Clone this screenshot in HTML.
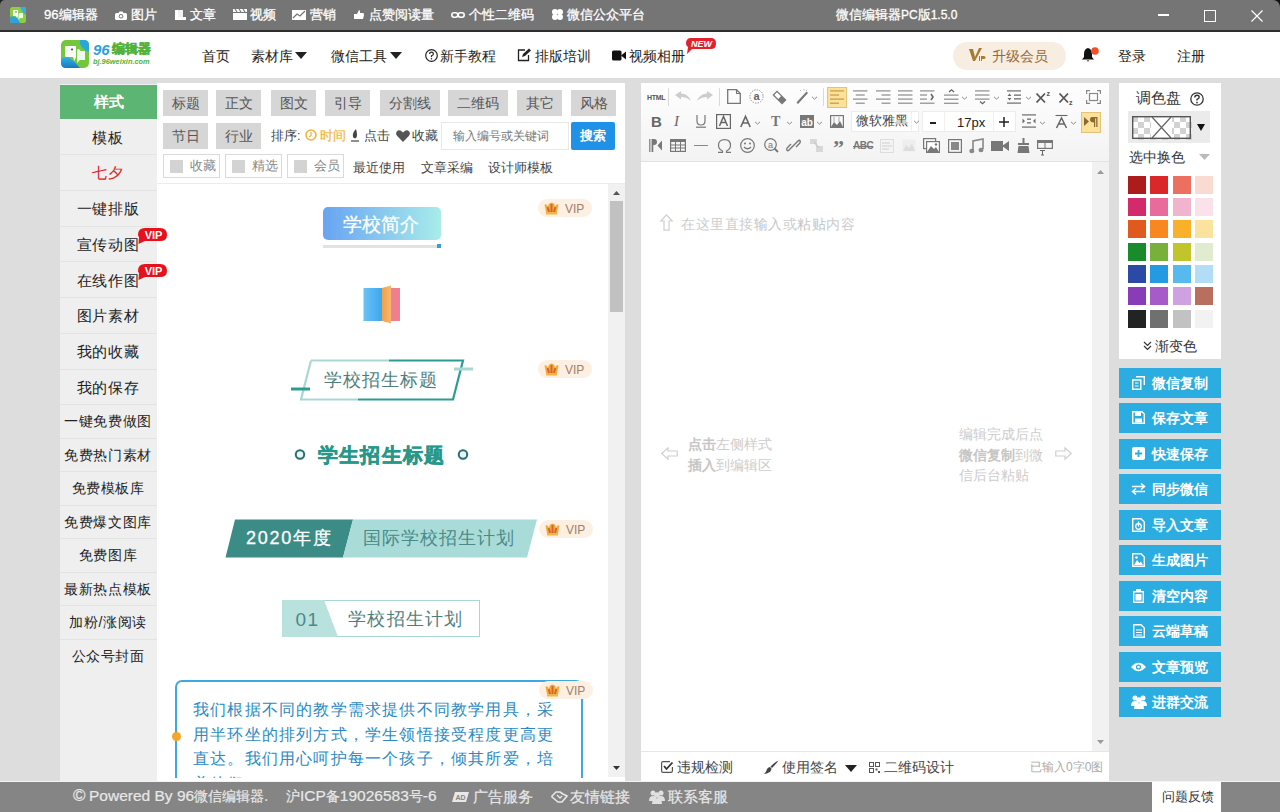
<!DOCTYPE html>
<html><head><meta charset="utf-8">
<style>
*{margin:0;padding:0;box-sizing:border-box}
html,body{width:1280px;height:812px;overflow:hidden}
body{position:relative;background:#dddddd;font-family:"Liberation Sans",sans-serif;font-size:14px;color:#333}
.a{position:absolute}
.t{position:absolute;white-space:nowrap;line-height:1}
svg{position:absolute;overflow:visible}
/* title bar */
#tb{left:0;top:0;width:1280px;height:32px;background:#757575;border-bottom:2px solid #2e2e2e}
#tb .t{color:#fff;font-size:14px;top:8px;-webkit-text-stroke:.3px #fff}
/* header */
#hd{left:0;top:32px;width:1280px;height:46px;background:#fff}
#hd .t{color:#222;font-size:14px;top:17px}
/* sidebar */
#sb{left:60px;top:84px;width:97px;height:698px;background:#efefef}
.si{position:absolute;left:0;width:97px;border-bottom:1px solid #e3e3e3;text-align:center;color:#222;font-size:15px;letter-spacing:.6px;text-indent:-1px}
/* panels */
#lp{left:157px;top:83px;width:468px;height:699px;background:#fff}
.tab{position:absolute;width:45px;height:26px;background:#d6d6d6;color:#555;font-size:14px;text-align:center;line-height:26px}
.ck{position:absolute;height:24px;border:1px solid #dadada;background:#fff;color:#888;font-size:12.5px;line-height:22px}
.ck i{position:absolute;left:6px;top:5px;width:13px;height:13px;background:#d3d3d3}
#ed{left:641px;top:83px;width:468px;height:699px;background:#fff}
#cp{left:1119px;top:83px;width:102px;height:276px;background:#fff}
.sw{position:absolute;width:18px;height:18px}
.btn{position:absolute;left:1119px;width:102px;height:30px;background:#2cade2;color:#fff;font-size:14px;font-weight:bold}
#ft{left:0;top:782px;width:1280px;height:30px;background:#858585}
#ft .t{color:#e8e8e8;font-size:14px;top:8px;-webkit-text-stroke:.2px #e8e8e8}
.vip{position:absolute;width:54px;height:18px;border-radius:9px;background:#fdf0e3}
.vip span{position:absolute;left:27px;top:4px;font-size:12px;color:#a08068;line-height:1}
</style></head><body>

<!-- TITLE BAR -->
<div class="a" style="left:1270px;top:0;width:10px;height:10px;background:#111"></div>
<div class="a" style="left:0;top:0;width:6px;height:6px;background:#222"></div>
<div id="tb" class="a" style="border-top-right-radius:7px;border-top-left-radius:5px">
  <svg style="left:10px;top:7px" width="16" height="16" viewBox="0 0 16 16">
    <rect x="0" y="0" width="16" height="16" rx="2.5" fill="#8ccf3e"/>
    <path d="M10 0 H13.5 Q16 0 16 2.5 V8 Q12 6 10 0Z" fill="#36aee0"/>
    <path d="M0 10 Q4 8 7 11 Q9 13 10 16 H2.5 Q0 16 0 13.5Z" fill="#2aa4dc"/>
    <path d="M3 3 H8 V9 L7 11 L6 9 H3Z" fill="#f6fff0"/>
    <path d="M9 6 H13 V11 H10 L8.5 13 V8Z" fill="#eef6f6"/>
    <circle cx="6" cy="5" r=".8" fill="#666"/>
  </svg>
  <div class="t" style="left:44px;font-size:13.2px">96编辑器</div>
  <svg style="left:115px;top:11px" width="12" height="9" viewBox="0 0 12 9"><path d="M1.5 2 H3.5 L4.5 .5 H7.5 L8.5 2 H10.5 Q12 2 12 3.5 V7.5 Q12 9 10.5 9 H1.5 Q0 9 0 7.5 V3.5 Q0 2 1.5 2Z" fill="#fff"/><circle cx="6" cy="5.3" r="2.2" fill="#757575"/><circle cx="6" cy="5.3" r="1.3" fill="#fff"/></svg>
  <div class="t" style="left:131px;font-size:13.2px">图片</div>
  <svg style="left:175px;top:10px" width="11" height="10" viewBox="0 0 11 10"><path d="M0 0 H3 V7 H11 V10 H0Z" fill="#fff"/><rect x="3" y="0" width="5" height="7" fill="#fff" opacity=".9"/></svg>
  <div class="t" style="left:190px;font-size:13.2px">文章</div>
  <svg style="left:233px;top:9px" width="14" height="11" viewBox="0 0 14 11"><rect x="0" y="0" width="14" height="3" fill="#fff"/><path d="M2 0 L4 3 M6 0 L8 3 M10 0 L12 3" stroke="#757575" stroke-width="1.2"/><rect x="0" y="4" width="14" height="7" fill="#fff"/></svg>
  <div class="t" style="left:250px;font-size:13.2px">视频</div>
  <svg style="left:292px;top:10px" width="14" height="10" viewBox="0 0 14 10"><rect width="14" height="10" fill="#fff"/><path d="M1 8 L5 4 L8 6 L13 1" stroke="#757575" stroke-width="1.3" fill="none"/></svg>
  <div class="t" style="left:310px;font-size:13.2px">营销</div>
  <svg style="left:354px;top:10px" width="10" height="9" viewBox="0 0 10 9"><path d="M0 4 H3 L5 0 Q6 0 6 2 V3 H9 Q10 3 10 5 L9 9 H0Z" fill="#fff"/></svg>
  <div class="t" style="left:369px;font-size:13.2px">点赞阅读量</div>
  <svg style="left:451px;top:12px" width="14" height="6" viewBox="0 0 14 6"><rect x=".8" y=".8" width="6" height="4.4" rx="2.2" stroke="#fff" stroke-width="1.6" fill="none"/><rect x="7.2" y=".8" width="6" height="4.4" rx="2.2" stroke="#fff" stroke-width="1.6" fill="none"/></svg>
  <div class="t" style="left:469px;font-size:13.2px">个性二维码</div>
  <svg style="left:551px;top:9px" width="13" height="11" viewBox="0 0 13 11"><circle cx="4" cy="3" r="3" fill="#fff"/><circle cx="9" cy="3" r="3" fill="#fff"/><circle cx="4" cy="8" r="3" fill="#fff"/><circle cx="9" cy="8" r="3" fill="#fff"/></svg>
  <div class="t" style="left:567px;font-size:13.2px">微信公众平台</div>
  <div class="t" style="left:836px;font-size:13.2px">微信编辑器<span style="font-size:12px">PC</span>版<span style="font-size:12px">1.5.0</span></div>
  <div class="a" style="left:1158px;top:14px;width:11px;height:1.5px;background:#fff"></div>
  <div class="a" style="left:1204px;top:10px;width:12px;height:12px;border:1.2px solid #fff"></div>
  <svg style="left:1251px;top:10px" width="12" height="12" viewBox="0 0 12 12"><path d="M0.5 0.5 L11.5 11.5 M11.5 0.5 L0.5 11.5" stroke="#fff" stroke-width="1.2"/></svg>
</div>

<!-- HEADER -->
<div id="hd" class="a">
  <svg style="left:61px;top:8px" width="28" height="28" viewBox="0 0 28 28">
    <defs><linearGradient id="lg2" x1="0" y1="0" x2="0" y2="1"><stop offset="0" stop-color="#2ab4e8"/><stop offset="1" stop-color="#1a78c0"/></linearGradient></defs>
    <rect x="0" y="0" width="28" height="28" rx="5" fill="#74c63a"/>
    <path d="M19 0 H23 Q28 0 28 5 V12 Q22 10 19 4Z" fill="#2aa6de"/>
    <path d="M0 19 Q5 15 10 19 Q15 23 19 28 H5 Q0 28 0 23Z" fill="url(#lg2)"/>
    <path d="M4 6 H14 Q15 6 15 7 V17 L13.5 21 L12 17 H5 Q4 17 4 16Z" fill="#fafafa"/>
    <path d="M16 10 Q17 8 19 10 L19.5 11 H24 V20 H19 L16 23Z" fill="#eef8ee"/>
    <circle cx="11" cy="9.5" r="1.1" fill="#555"/>
  </svg>
  <div class="t" style="left:93px;top:10px;font-size:15px;font-weight:bold;font-style:italic;color:#2b9fdc">96</div>
  <div class="t" style="left:112px;top:10px;font-size:13px;font-weight:bold;color:#52b23a;-webkit-text-stroke:.5px #52b23a">编辑器</div>
  <div class="t" style="left:93px;top:26px;font-size:7.4px;font-style:italic;font-weight:bold;color:#52b13c">bj.96weixin.com</div>
  <div class="t" style="left:202px">首页</div>
  <div class="t" style="left:251px">素材库</div>
  <svg style="left:295px;top:20px" width="12" height="8" viewBox="0 0 12 8"><path d="M0 0 H12 L6 7Z" fill="#222"/></svg>
  <div class="t" style="left:331px">微信工具</div>
  <svg style="left:390px;top:20px" width="12" height="8" viewBox="0 0 12 8"><path d="M0 0 H12 L6 7Z" fill="#222"/></svg>
  <svg style="left:425px;top:17px" width="13" height="13" viewBox="0 0 13 13"><circle cx="6.5" cy="6.5" r="5.8" stroke="#222" stroke-width="1.2" fill="none"/><path d="M4.6 5 Q4.6 3.2 6.5 3.2 Q8.4 3.2 8.4 4.9 Q8.4 6 6.5 6.8 V8" stroke="#222" stroke-width="1.2" fill="none"/><circle cx="6.5" cy="9.8" r=".8" fill="#222"/></svg>
  <div class="t" style="left:440px">新手教程</div>
  <svg style="left:517px;top:16px" width="15" height="14" viewBox="0 0 15 14"><path d="M8 2 H1.5 V12.5 H11.5 V7" stroke="#222" stroke-width="1.3" fill="none"/><path d="M5 9 L6 6 L12 0.5 L14 2.5 L8 8Z" fill="#222"/></svg>
  <div class="t" style="left:535px">排版培训</div>
  <svg style="left:612px;top:18px" width="14" height="11" viewBox="0 0 14 11"><rect x="0" y="0.5" width="9.5" height="10" rx="1.5" fill="#111"/><path d="M9 5.5 L14 1.5 V9.5Z" fill="#111"/></svg>
  <div class="t" style="left:629px">视频相册</div>
  <svg style="left:686px;top:6px" width="30" height="16" viewBox="0 0 30 16"><path d="M5 0 H25 Q30 0 30 5.5 Q30 11 25 11 H6 L1 16 L2 9 Q0 7.5 0 5.5 Q0 0 5 0Z" fill="#e4212a"/><text x="15.5" y="9" text-anchor="middle" font-family="Liberation Sans" font-size="9" font-weight="bold" font-style="italic" fill="#fff">NEW</text></svg>
  <div class="a" style="left:953px;top:10px;width:113px;height:28px;border-radius:14px;background:#f7eee1"></div>
  <svg style="left:969px;top:16px" width="17" height="14" viewBox="0 0 17 14"><path d="M0 1 H4 L6 9 L10 0 H13 L6 13 H4Z" fill="#a87a32"/><path d="M10 8 H11 V13 H10Z M12 8 H15 Q16.5 8 16.5 9.5 Q16.5 11 15 11 H13 V13 H12Z" fill="#a87a32"/></svg>
  <div class="t" style="left:992px;top:17px;font-size:14.4px;color:#9a6835">升级会员</div>
  <svg style="left:1081px;top:15px" width="18" height="16" viewBox="0 0 18 16"><path d="M7 1 Q3 2 3 7 V10 L1 12.5 H13 L11 10 V7 Q11 2 7 1Z" fill="#111"/><path d="M5.5 13.5 Q7 15.5 8.5 13.5Z" fill="#111"/><circle cx="14" cy="4" r="3.8" fill="#f04f2c"/></svg>
  <div class="t" style="left:1118px;top:17px;font-size:14.4px">登录</div>
  <div class="t" style="left:1177px;top:17px;font-size:14.4px">注册</div>
</div>

<!-- SIDEBAR -->
<div id="sb" class="a">
  <div class="si" style="top:1px;height:34.2px;line-height:34.2px;background:#5db574;color:#fff;font-weight:bold;border-bottom:none;letter-spacing:0;text-indent:0">样式</div>
  <div class="si" style="top:35.7px;height:35.7px;line-height:35.7px;">模板</div>
  <div class="si" style="top:71.4px;height:35.7px;line-height:35.7px;color:#d9221c">七夕</div>
  <div class="si" style="top:107.1px;height:35.7px;line-height:35.7px;">一键排版</div>
  <div class="si" style="top:142.8px;height:35.7px;line-height:35.7px;">宣传动图</div>
  <div class="si" style="top:178.5px;height:35.7px;line-height:35.7px;">在线作图</div>
  <div class="si" style="top:214.2px;height:35.7px;line-height:35.7px;">图片素材</div>
  <div class="si" style="top:249.9px;height:35.7px;line-height:35.7px;">我的收藏</div>
  <div class="si" style="top:285.6px;height:35.7px;line-height:35.7px;">我的保存</div>
  <div class="si" style="top:321.3px;height:33.5px;line-height:33.5px;font-size:14px">一键免费做图</div>
  <div class="si" style="top:354.8px;height:33.5px;line-height:33.5px;font-size:14px">免费热门素材</div>
  <div class="si" style="top:388.3px;height:33.5px;line-height:33.5px;font-size:14px">免费模板库</div>
  <div class="si" style="top:421.8px;height:33.5px;line-height:33.5px;font-size:14px">免费爆文图库</div>
  <div class="si" style="top:455.3px;height:33.5px;line-height:33.5px;font-size:14px">免费图库</div>
  <div class="si" style="top:488.8px;height:33.5px;line-height:33.5px;font-size:14px">最新热点模板</div>
  <div class="si" style="top:522.3px;height:33.5px;line-height:33.5px;font-size:14px">加粉/涨阅读</div>
  <div class="si" style="top:555.8px;height:33.5px;line-height:33.5px;font-size:14px;border-bottom:none">公众号封面</div>
</div>

<!-- LEFT PANEL -->
<div id="lp" class="a">
  <div class="tab" style="left:6px;top:7px;width:45px">标题</div>
  <div class="tab" style="left:59px;top:7px;width:45px">正文</div>
  <div class="tab" style="left:114px;top:7px;width:45px">图文</div>
  <div class="tab" style="left:168px;top:7px;width:45px">引导</div>
  <div class="tab" style="left:223px;top:7px;width:60px">分割线</div>
  <div class="tab" style="left:291px;top:7px;width:60px">二维码</div>
  <div class="tab" style="left:360px;top:7px;width:45px">其它</div>
  <div class="tab" style="left:414px;top:7px;width:45px">风格</div>
  <div class="tab" style="left:6px;top:40px">节日</div>
  <div class="tab" style="left:59px;top:40px">行业</div>
  <div class="t" style="left:114px;top:47px;font-size:12.5px;color:#444">排序:</div>
  <svg style="left:148px;top:46px" width="12" height="12" viewBox="0 0 12 12"><circle cx="6" cy="6" r="5" stroke="#f0b43c" stroke-width="1.6" fill="none"/><path d="M6 3 V6.5 L4 8" stroke="#f0b43c" stroke-width="1.3" fill="none"/></svg>
  <div class="t" style="left:163px;top:47px;font-size:12.5px;color:#f2b530;-webkit-text-stroke:.2px #f2b530">时间</div>
  <svg style="left:194px;top:46px" width="9" height="13" viewBox="0 0 9 13"><path d="M5 0 Q1 4 2 8 Q3 10 5 9 Q7 7 5 0Z" fill="#444"/><path d="M0 12 H8" stroke="#444" stroke-width="1.2"/></svg>
  <div class="t" style="left:207px;top:47px;font-size:12.5px;color:#444">点击</div>
  <svg style="left:239px;top:47px" width="14" height="12" viewBox="0 0 14 12"><path d="M7 12 L1.2 6 Q-1 3.5 1 1.2 Q3.5 -1 7 2.5 Q10.5 -1 13 1.2 Q15 3.5 12.8 6Z" fill="#555"/></svg>
  <div class="t" style="left:255px;top:47px;font-size:12.5px;color:#444">收藏</div>
  <div class="a" style="left:284px;top:39px;width:128px;height:28px;border:1px solid #e8e8e8;background:#fff"></div>
  <div class="t" style="left:296px;top:47px;font-size:12px;color:#777">输入编号或关键词</div>
  <div class="a" style="left:414px;top:39px;width:44px;height:28px;background:#1f92e8;border-radius:2px"></div>
  <div class="t" style="left:423px;top:46px;font-size:13px;color:#fff;font-weight:bold">搜索</div>
  <div class="ck" style="left:6px;top:71px;width:57px"><i></i><span style="position:absolute;left:26px">收藏</span></div>
  <div class="ck" style="left:68px;top:71px;width:57px"><i></i><span style="position:absolute;left:26px">精选</span></div>
  <div class="ck" style="left:130px;top:71px;width:57px"><i></i><span style="position:absolute;left:26px">会员</span></div>
  <div class="t" style="left:196px;top:78px;font-size:13px;color:#444">最近使用</div>
  <div class="t" style="left:264px;top:78px;font-size:13px;color:#444">文章采编</div>
  <div class="t" style="left:331px;top:78px;font-size:13px;color:#444">设计师模板</div>
  <div class="a" style="left:0;top:100px;width:468px;height:1px;background:#ececec"></div>
  <!-- scrollbar -->
  <div class="a" style="left:451px;top:101px;width:17px;height:593px;background:#f1f1f1"></div>
  <svg style="left:456px;top:108px" width="7" height="4" viewBox="0 0 7 4"><path d="M0 4 L3.5 0 L7 4Z" fill="#555"/></svg>
  <div class="a" style="left:453px;top:118px;width:13px;height:111px;background:#c1c1c1"></div>
  <svg style="left:456px;top:683px" width="7" height="4" viewBox="0 0 7 4"><path d="M0 0 L3.5 4 L7 0Z" fill="#333"/></svg>
</div>

<!-- PREVIEW (body coords) -->
<div class="a" style="left:157px;top:184px;width:451px;height:594px;overflow:hidden">
 <div class="a" style="left:-157px;top:-184px;width:1280px;height:1000px">
  <!-- 学校简介 -->
  <div class="a" style="left:323px;top:207px;width:118px;height:33px;border-radius:5px;background:linear-gradient(90deg,#68a4f2,#a8ecea)"></div>
  <div class="t" style="left:343px;top:215px;font-size:19px;color:#fff;-webkit-text-stroke:.25px #fff">学校简介</div>
  <div class="a" style="left:323px;top:245px;width:118px;height:3px;background:#e2e2e2"></div>
  <div class="a" style="left:437px;top:244px;width:4px;height:4px;background:#3e9ccc"></div>
  <div class="vip" style="left:538px;top:199px"><svg style="left:6px;top:2px" width="15" height="14" viewBox="0 0 15 14"><path d="M0.5 3.5 Q3 2.5 4 6 L4.5 3.5 Q7.5 -0.5 10.5 3.5 L11 6 Q12 2.5 14.5 3.5 L13 11 H2Z" fill="#f3aa3c"/><path d="M3.6 6 Q4.6 9 5 11 M7.5 3 V11 M11.4 6 Q10.4 9 10 11" stroke="#d6642c" stroke-width="1.9" fill="none"/><rect x="2" y="11" width="11" height="2.5" fill="#f2b444"/></svg><span>VIP</span></div>
  <!-- book -->
  <svg style="left:363px;top:285px" width="38" height="39" viewBox="0 0 38 39">
   <defs><linearGradient id="bk1" x1="0" x2="1"><stop offset="0" stop-color="#6cc2f4"/><stop offset="1" stop-color="#3aa6ee"/></linearGradient>
   <linearGradient id="bk2" x1="0" x2="1"><stop offset="0" stop-color="#f0a048"/><stop offset="1" stop-color="#f6b870"/></linearGradient></defs>
   <rect x="0.5" y="3" width="19" height="33" fill="url(#bk1)"/>
   <path d="M19 3 L28 0.5 V38.5 L19 36Z" fill="url(#bk2)"/>
   <rect x="28" y="3" width="9" height="33" fill="#f07e8e"/>
  </svg>
  <!-- 学校招生标题 frame -->
  <svg style="left:288px;top:358px" width="190" height="44" viewBox="0 0 190 44">
   <path d="M23 2.5 H101" stroke="#a9d7d3" stroke-width="2.2" fill="none"/>
   <path d="M101 2.5 H175 L165 41.5 H70" stroke="#2c9c92" stroke-width="2.2" fill="none"/>
   <path d="M70 41.5 H13 L23 2.5" stroke="#a9d7d3" stroke-width="2.2" fill="none"/>
   <path d="M3 31 H22" stroke="#2c9c92" stroke-width="3" fill="none"/>
   <path d="M166 11 H185" stroke="#a9d7d3" stroke-width="3" fill="none"/>
  </svg>
  <div class="t" style="left:324px;top:371px;font-size:18px;color:#4e7e7c;letter-spacing:1px">学校招生标题</div>
  <div class="vip" style="left:538px;top:360px"><svg style="left:6px;top:2px" width="15" height="14" viewBox="0 0 15 14"><path d="M0.5 3.5 Q3 2.5 4 6 L4.5 3.5 Q7.5 -0.5 10.5 3.5 L11 6 Q12 2.5 14.5 3.5 L13 11 H2Z" fill="#f3aa3c"/><path d="M3.6 6 Q4.6 9 5 11 M7.5 3 V11 M11.4 6 Q10.4 9 10 11" stroke="#d6642c" stroke-width="1.9" fill="none"/><rect x="2" y="11" width="11" height="2.5" fill="#f2b444"/></svg><span>VIP</span></div>
  <!-- 学生招生标题 -->
  <svg style="left:291px;top:446px" width="180" height="17" viewBox="0 0 180 17">
   <circle cx="9" cy="8.5" r="6" fill="#e0f6f6" opacity=".8"/><circle cx="9" cy="8.5" r="4.2" stroke="#2f6e6a" stroke-width="2" fill="#e4f7f7"/>
   <circle cx="172" cy="8.5" r="6" fill="#e0f6f6" opacity=".8"/><circle cx="172" cy="8.5" r="4.2" stroke="#2f6e6a" stroke-width="2" fill="#e4f7f7"/>
  </svg>
  <div class="t" style="left:318px;top:445px;font-size:20px;font-weight:bold;color:#26988a;letter-spacing:1.2px;-webkit-text-stroke:.5px #26988a">学生招生标题</div>
  <!-- 2020年度 -->
  <svg style="left:225px;top:519px" width="315" height="39" viewBox="0 0 315 39">
   <path d="M10 0.5 H128 L118 38.5 H0.5Z" fill="#3b8b87"/>
   <path d="M128 0.5 H312 L302 38.5 H118Z" fill="#a9dcd8"/>
  </svg>
  <div class="t" style="left:246px;top:529px;font-size:18px;color:#fff;letter-spacing:1.7px;-webkit-text-stroke:.3px #fff">2020年度</div>
  <div class="t" style="left:363px;top:529px;font-size:18px;color:#4a8a88;letter-spacing:1px">国际学校招生计划</div>
  <div class="vip" style="left:539px;top:520px"><svg style="left:6px;top:2px" width="15" height="14" viewBox="0 0 15 14"><path d="M0.5 3.5 Q3 2.5 4 6 L4.5 3.5 Q7.5 -0.5 10.5 3.5 L11 6 Q12 2.5 14.5 3.5 L13 11 H2Z" fill="#f3aa3c"/><path d="M3.6 6 Q4.6 9 5 11 M7.5 3 V11 M11.4 6 Q10.4 9 10 11" stroke="#d6642c" stroke-width="1.9" fill="none"/><rect x="2" y="11" width="11" height="2.5" fill="#f2b444"/></svg><span>VIP</span></div>
  <!-- 01 -->
  <div class="a" style="left:282px;top:600px;width:198px;height:37px;border:1.5px solid #a9d8d4"></div>
  <svg style="left:282px;top:600px" width="58" height="37" viewBox="0 0 58 37"><path d="M0 0 H42 L56 37 H0Z" fill="#b9e1dd"/></svg>
  <div class="t" style="left:295.5px;top:610px;font-size:19px;color:#4a8a88;letter-spacing:1.5px">01</div>
  <div class="t" style="left:348px;top:610px;font-size:18px;color:#4e7e7c;letter-spacing:1.3px">学校招生计划</div>
  <!-- text box -->
  <div class="a" style="left:175px;top:680px;width:408px;height:200px;border:2px solid #3ea9e0;border-radius:7px"></div>
  <div class="a" style="left:172px;top:732px;width:9px;height:9px;border-radius:50%;background:#f4a62a"></div>
  <div class="a" style="left:193px;top:698px;width:370px;font-size:16px;line-height:24.5px;color:#2b8ac2;letter-spacing:1.2px">我们根据不同的教学需求提供不同教学用具，采用半环坐的排列方式，学生领悟接受程度更高更直达。我们用心呵护每一个孩子，倾其所爱，培养他们</div>
  <div class="vip" style="left:539px;top:681px"><svg style="left:6px;top:2px" width="15" height="14" viewBox="0 0 15 14"><path d="M0.5 3.5 Q3 2.5 4 6 L4.5 3.5 Q7.5 -0.5 10.5 3.5 L11 6 Q12 2.5 14.5 3.5 L13 11 H2Z" fill="#f3aa3c"/><path d="M3.6 6 Q4.6 9 5 11 M7.5 3 V11 M11.4 6 Q10.4 9 10 11" stroke="#d6642c" stroke-width="1.9" fill="none"/><rect x="2" y="11" width="11" height="2.5" fill="#f2b444"/></svg><span>VIP</span></div>
 </div>
</div>
<svg style="left:138px;top:228px" width="29" height="16" viewBox="0 0 29 16"><path d="M7 0 H22 Q29 0 29 7 Q29 13 22 13 H7 L0.5 16 L1 9 Q0 8 0 7 Q0 0 7 0Z" fill="#e8111b"/><text x="15.5" y="10.5" text-anchor="middle" font-family="Liberation Sans" font-size="11" font-weight="bold" fill="#fff">VIP</text></svg>
<svg style="left:138px;top:264px" width="29" height="16" viewBox="0 0 29 16"><path d="M7 0 H22 Q29 0 29 7 Q29 13 22 13 H7 L0.5 16 L1 9 Q0 8 0 7 Q0 0 7 0Z" fill="#e8111b"/><text x="15.5" y="10.5" text-anchor="middle" font-family="Liberation Sans" font-size="11" font-weight="bold" fill="#fff">VIP</text></svg>

<!-- EDITOR -->
<div id="ed" class="a"></div>
<div class="a" style="left:641px;top:83px;width:468px;height:79px;background:linear-gradient(#fefefe,#f3f3f3);border-bottom:1px solid #e3e3e3"></div>
<div class="t" style="left:647px;top:94px;font-size:7px;font-weight:bold;color:#555;letter-spacing:-.3px">HTML</div>
<div class="a" style="left:668px;top:88px;width:1px;height:18px;background:#dadada"></div>
<svg style="left:675px;top:91px" width="16" height="10" viewBox="0 0 16 10"><path d="M0 4 L6 0 V2.5 Q13 2.5 16 10 Q12 6 6 6 V8.5Z" fill="#cdcdcd"/></svg>
<svg style="left:697px;top:91px" width="16" height="10" viewBox="0 0 16 10"><path d="M16 4 L10 0 V2.5 Q3 2.5 0 10 Q4 6 10 6 V8.5Z" fill="#cdcdcd"/></svg>
<div class="a" style="left:719px;top:88px;width:1px;height:18px;background:#dadada"></div>
<svg style="left:727px;top:89px" width="14" height="15" viewBox="0 0 14 15"><path d="M.7 .7 H9.5 L13.3 4.5 V14.3 H.7Z" stroke="#777" stroke-width="1.3" fill="none"/><path d="M9.5 .7 V4.5 H13.3" stroke="#777" stroke-width="1.1" fill="none"/></svg>
<svg style="left:749px;top:89px" width="15" height="15" viewBox="0 0 15 15"><text x="7.5" y="11" text-anchor="middle" font-family="Liberation Sans" font-size="11" font-weight="bold" fill="#666">a</text><circle cx="7.5" cy="7.5" r="6.6" stroke="#888" stroke-width="1" stroke-dasharray="1.3 1.3" fill="none"/></svg>
<svg style="left:772px;top:90px" width="15" height="15" viewBox="0 0 15 15"><path d="M5 0.5 L14.5 10 L10 14.5 L0.5 5Z" fill="#777"/><path d="M5 2.3 L9 6.3 L6.3 9 L2.3 5Z" fill="#fff"/></svg>
<svg style="left:796px;top:89px" width="13" height="16" viewBox="0 0 13 16"><path d="M12 4 L2 15 L0.5 13.5 L10.5 2.5Z" fill="#777"/><path d="M4 1 L5 2 M8 0 V1.5 M11 1 L10 2" stroke="#aaa" stroke-width=".8"/></svg>
<svg style="left:811px;top:96px" width="7" height="4" viewBox="0 0 7 4"><path d="M1 .8 L3.5 3.2 L6 .8" stroke="#8a8a8a" stroke-width="1" fill="none"/></svg>
<div class="a" style="left:823px;top:88px;width:1px;height:18px;background:#dadada"></div>
<div class="a" style="left:827px;top:87px;width:20px;height:21px;background:#fce19a;border:1px solid #e3c37a"></div>
<svg style="left:830px;top:90px" width="15" height="14" viewBox="0 0 15 14"><rect x="0" y="0.3" width="14" height="1.2" fill="#c39a45"/><rect x="0" y="4.3999999999999995" width="9" height="1.2" fill="#c39a45"/><rect x="0" y="8.5" width="14" height="1.2" fill="#c39a45"/><rect x="0" y="12.6" width="9" height="1.2" fill="#c39a45"/></svg><svg style="left:853px;top:90px" width="15" height="14" viewBox="0 0 15 14"><rect x="0" y="0.3" width="14.5" height="1.2" fill="#8c8c8c"/><rect x="2.75" y="4.3999999999999995" width="9" height="1.2" fill="#8c8c8c"/><rect x="0" y="8.5" width="14.5" height="1.2" fill="#8c8c8c"/><rect x="2.75" y="12.6" width="9" height="1.2" fill="#8c8c8c"/></svg><svg style="left:876px;top:90px" width="15" height="14" viewBox="0 0 15 14"><rect x="0" y="0.3" width="14.5" height="1.2" fill="#8c8c8c"/><rect x="5.5" y="4.3999999999999995" width="9" height="1.2" fill="#8c8c8c"/><rect x="0" y="8.5" width="14.5" height="1.2" fill="#8c8c8c"/><rect x="5.5" y="12.6" width="9" height="1.2" fill="#8c8c8c"/></svg><svg style="left:898px;top:90px" width="15" height="14" viewBox="0 0 15 14"><rect x="0" y="0.3" width="14.5" height="1.2" fill="#8c8c8c"/><rect x="0" y="4.3999999999999995" width="14.5" height="1.2" fill="#8c8c8c"/><rect x="0" y="8.5" width="14.5" height="1.2" fill="#8c8c8c"/><rect x="0" y="12.6" width="14.5" height="1.2" fill="#8c8c8c"/></svg><svg style="left:920px;top:90px" width="15" height="14" viewBox="0 0 15 14"><rect x="0" y=".3" width="14.5" height="1.2" fill="#8c8c8c"/><rect x="0" y="4.4" width="7" height="1.2" fill="#8c8c8c"/><rect x="0" y="8.5" width="7" height="1.2" fill="#8c8c8c"/><rect x="0" y="12.6" width="14.5" height="1.2" fill="#8c8c8c"/><path d="M11 4 L13 7 L11 10" stroke="#666" stroke-width="1.6" fill="none"/></svg>
<svg style="left:944px;top:89px" width="15" height="15" viewBox="0 0 15 15"><path d="M5 3 L7.5 .8 L10 3" stroke="#666" stroke-width="1.3" fill="none"/><rect x="0" y="5.5" width="14.5" height="1.2" fill="#8c8c8c"/><rect x="0" y="9.6" width="14.5" height="1.2" fill="#8c8c8c"/><rect x="0" y="13.7" width="14.5" height="1.2" fill="#8c8c8c"/></svg>
<svg style="left:961px;top:96px" width="7" height="4" viewBox="0 0 7 4"><path d="M1 .8 L3.5 3.2 L6 .8" stroke="#8a8a8a" stroke-width="1" fill="none"/></svg>
<svg style="left:975px;top:90px" width="15" height="15" viewBox="0 0 15 15"><rect x="0" y=".3" width="14.5" height="1.2" fill="#8c8c8c"/><rect x="0" y="4.4" width="14.5" height="1.2" fill="#8c8c8c"/><rect x="0" y="8.5" width="14.5" height="1.2" fill="#8c8c8c"/><path d="M5 11.5 L7.5 13.7 L10 11.5" stroke="#666" stroke-width="1.3" fill="none"/></svg>
<svg style="left:993px;top:96px" width="7" height="4" viewBox="0 0 7 4"><path d="M1 .8 L3.5 3.2 L6 .8" stroke="#8a8a8a" stroke-width="1" fill="none"/></svg>
<svg style="left:1007px;top:90px" width="14" height="14" viewBox="0 0 14 14"><rect x="0" y=".3" width="14" height="1.2" fill="#6b6b6b"/><rect x="0" y="12.5" width="14" height="1.2" fill="#6b6b6b"/><path d="M2.5 3.5 L4.5 6 H.5Z M2.5 10.5 L4.5 8 H.5Z" fill="#6b6b6b"/><rect x="7" y="4.5" width="7" height="1.3" fill="#6b6b6b"/><rect x="7" y="8.2" width="7" height="1.3" fill="#6b6b6b"/></svg>
<svg style="left:1025px;top:96px" width="7" height="4" viewBox="0 0 7 4"><path d="M1 .8 L3.5 3.2 L6 .8" stroke="#8a8a8a" stroke-width="1" fill="none"/></svg>
<svg style="left:1036px;top:90px" width="15" height="13" viewBox="0 0 15 13"><path d="M0.5 3.5 L9 12.5 M9 3.5 L0.5 12.5" stroke="#555" stroke-width="1.8"/><text x="10.5" y="6" font-family="Liberation Sans" font-size="7" font-weight="bold" fill="#555">z</text></svg>
<svg style="left:1059px;top:93px" width="15" height="13" viewBox="0 0 15 13"><path d="M0.5 0.5 L9 9.5 M9 0.5 L0.5 9.5" stroke="#555" stroke-width="1.8"/><text x="10" y="11.5" font-family="Liberation Sans" font-size="7" font-weight="bold" fill="#555">z</text></svg>
<svg style="left:1086px;top:90px" width="15" height="14" viewBox="0 0 15 14"><path d="M.6 4 V.6 H4 M11 .6 H14.4 V4 M14.4 10 V13.4 H11 M4 13.4 H.6 V10" stroke="#888" stroke-width="1.2" fill="none"/><rect x="3.5" y="3.5" width="8" height="7" stroke="#888" stroke-width="1.2" fill="none"/></svg>
<!-- row 2 -->
<div class="t" style="left:651px;top:114px;font-size:15px;font-weight:bold;color:#666">B</div>
<div class="t" style="left:674px;top:114px;font-size:15px;font-style:italic;font-family:'Liberation Serif';color:#666">I</div>
<svg style="left:696px;top:115px" width="10" height="13" viewBox="0 0 10 13"><path d="M1 0 V6 Q1 10 5 10 Q9 10 9 6 V0" stroke="#777" stroke-width="1.2" fill="none"/><rect x="0" y="11.6" width="10" height="1.2" fill="#777"/></svg>
<svg style="left:716px;top:114px" width="15" height="15" viewBox="0 0 15 15"><rect x=".6" y=".6" width="13.8" height="13.8" stroke="#666" stroke-width="1.2" fill="none"/><path d="M3.5 12 L7.5 2.5 L11.5 12 M5 8.5 H10" stroke="#666" stroke-width="1.5" fill="none"/></svg>
<svg style="left:740px;top:116px" width="11" height="11" viewBox="0 0 11 11"><path d="M.8 11 L5.5 .5 L10.2 11 M2.6 7 H8.4" stroke="#666" stroke-width="1.6" fill="none"/></svg>
<svg style="left:754px;top:121px" width="7" height="4" viewBox="0 0 7 4"><path d="M1 .8 L3.5 3.2 L6 .8" stroke="#8a8a8a" stroke-width="1" fill="none"/></svg>
<div class="t" style="left:771px;top:115px;font-size:14px;font-family:'Liberation Serif';font-weight:bold;color:#777">T</div>
<svg style="left:786px;top:121px" width="7" height="4" viewBox="0 0 7 4"><path d="M1 .8 L3.5 3.2 L6 .8" stroke="#8a8a8a" stroke-width="1" fill="none"/></svg>
<svg style="left:800px;top:115px" width="14" height="13" viewBox="0 0 14 13"><rect width="14" height="13" fill="#777"/><text x="7" y="11" text-anchor="middle" font-family="Liberation Sans" font-size="10" font-weight="bold" fill="#fff">ab</text></svg>
<svg style="left:816px;top:121px" width="7" height="4" viewBox="0 0 7 4"><path d="M1 .8 L3.5 3.2 L6 .8" stroke="#8a8a8a" stroke-width="1" fill="none"/></svg>
<svg style="left:830px;top:115px" width="14" height="13" viewBox="0 0 14 13"><rect x=".6" y=".6" width="12.8" height="11.8" stroke="#777" stroke-width="1.2" fill="none"/><path d="M1 12 L4 7 L7 10 L10 6 L13 12Z" fill="#777"/><path d="M4 2 V7 M9 2 V7" stroke="#999" stroke-width=".8"/></svg>
<div class="a" style="left:851px;top:111px;width:68px;height:21px;background:#fff;border:1px solid #ececec"></div>
<div class="a" style="left:911px;top:112px;width:1px;height:19px;background:#f0f0f0"></div>
<div class="t" style="left:856px;top:115px;font-size:12.5px;color:#444">微软雅黑</div>
<svg style="left:913px;top:120px" width="7" height="4" viewBox="0 0 7 4"><path d="M1 .8 L3.5 3.2 L6 .8" stroke="#8a8a8a" stroke-width="1" fill="none"/></svg>
<div class="a" style="left:922px;top:111px;width:94px;height:21px;background:#fff;border:1px solid #ececec"></div>
<div class="a" style="left:944px;top:112px;width:1px;height:19px;background:#f0f0f0"></div>
<div class="a" style="left:993px;top:112px;width:1px;height:19px;background:#f0f0f0"></div>
<div class="a" style="left:930px;top:122px;width:6px;height:2px;background:#222"></div>
<div class="t" style="left:957px;top:116px;font-size:13px;color:#222">17px</div>
<svg style="left:999px;top:117px" width="10" height="10" viewBox="0 0 10 10"><path d="M5 0 V10 M0 5 H10" stroke="#222" stroke-width="1.5"/></svg>
<svg style="left:1022px;top:114px" width="14" height="14" viewBox="0 0 14 14"><rect x="0" y=".3" width="14" height="1.2" fill="#6b6b6b"/><rect x="0" y="12.5" width="14" height="1.2" fill="#6b6b6b"/><path d="M0.5 4.5 L3 7 L.5 9.5Z M13.5 4.5 L11 7 L13.5 9.5Z" fill="#6b6b6b"/><rect x="5" y="4.5" width="4" height="1.3" fill="#6b6b6b"/><rect x="5" y="8.2" width="4" height="1.3" fill="#6b6b6b"/></svg>
<svg style="left:1039px;top:121px" width="7" height="4" viewBox="0 0 7 4"><path d="M1 .8 L3.5 3.2 L6 .8" stroke="#8a8a8a" stroke-width="1" fill="none"/></svg>
<svg style="left:1055px;top:114px" width="13" height="14" viewBox="0 0 13 14"><path d="M.5 1.5 H12.5" stroke="#666" stroke-width="1.1"/><path d="M1.5 14 L6.5 4 L11.5 14 M3.5 10 H9.5" stroke="#666" stroke-width="1.5" fill="none"/></svg>
<svg style="left:1070px;top:121px" width="7" height="4" viewBox="0 0 7 4"><path d="M1 .8 L3.5 3.2 L6 .8" stroke="#8a8a8a" stroke-width="1" fill="none"/></svg>
<div class="a" style="left:1081px;top:112px;width:20px;height:21px;background:#fce19a;border:1px solid #e3c37a"></div>
<svg style="left:1084px;top:116px" width="14" height="12" viewBox="0 0 14 12"><path d="M0 1 L5 5.5 L0 10Z" fill="#8a6a30"/><path d="M8 1 H13.5 V11 H12.2 V2.2 H11.2 V11 H10 V6.5 Q6 6.5 6 3.8 Q6 1 8 1Z" fill="#8a6a30"/></svg>
<!-- row 3 -->
<svg style="left:649px;top:139px" width="13" height="13" viewBox="0 0 13 13"><path d="M0.5 0 V13 M2 0 V13" stroke="#777" stroke-width=".8"/><path d="M3 0 H5 Q8 0 8 3 Q8 6 5 6 H4.3 V13 H3Z" fill="#777"/><path d="M13 1.5 L8.5 6.5 L13 11.5Z" fill="#777"/></svg>
<svg style="left:670px;top:139px" width="16" height="13" viewBox="0 0 16 13"><rect x=".6" y=".6" width="14.8" height="11.8" stroke="#777" stroke-width="1.2" fill="none"/><rect x="0" y="0" width="16" height="3" fill="#777"/><path d="M0 6 H16 M0 9 H16 M5.5 0 V13 M10.5 0 V13" stroke="#777" stroke-width="1"/></svg>
<div class="a" style="left:694px;top:145px;width:14px;height:1.2px;background:#888"></div>
<svg style="left:717px;top:139px" width="15" height="14" viewBox="0 0 15 14"><path d="M1 13.4 H5.5 V12 Q1.5 10 1.5 6.5 Q1.5 .7 7.5 .7 Q13.5 .7 13.5 6.5 Q13.5 10 9.5 12 V13.4 H14" stroke="#777" stroke-width="1.2" fill="none"/></svg>
<svg style="left:740px;top:138px" width="15" height="15" viewBox="0 0 15 15"><circle cx="7.5" cy="7.5" r="6.8" stroke="#777" stroke-width="1.2" fill="none"/><circle cx="5" cy="5.5" r="1" fill="#777"/><circle cx="10" cy="5.5" r="1" fill="#777"/><path d="M4 9 Q7.5 12.5 11 9" stroke="#777" stroke-width="1.2" fill="none"/></svg>
<svg style="left:764px;top:138px" width="15" height="15" viewBox="0 0 15 15"><circle cx="6.5" cy="6.5" r="5.8" stroke="#777" stroke-width="1.2" fill="none"/><text x="6.5" y="9.5" text-anchor="middle" font-family="Liberation Sans" font-size="9" fill="#777">a</text><path d="M10.5 10.5 L14 14" stroke="#777" stroke-width="1.8"/></svg>
<svg style="left:786px;top:138px" width="15" height="15" viewBox="0 0 15 15"><path d="M6 9 L3 12 Q1.5 13.5 0.8 12 Q0.3 10.5 2 9 L5 6 M9 6 L12 3 Q13.5 1.5 14.2 3 Q14.7 4.5 13 6 L10 9 M5 10 L10 5" stroke="#777" stroke-width="1.4" fill="none"/></svg>
<svg style="left:809px;top:138px" width="15" height="15" viewBox="0 0 15 15"><rect x="1" y="1" width="7" height="5" fill="#d8d8d8"/><rect x="7" y="8" width="7" height="6" fill="#d8d8d8"/><path d="M5 4 L10 10" stroke="#ccc" stroke-width="1.5"/></svg>
<div class="t" style="left:833px;top:137px;font-size:22px;font-weight:bold;font-family:'Liberation Serif';color:#777">”</div>
<div class="t" style="left:853px;top:141px;font-size:10px;font-weight:bold;color:#777;letter-spacing:-.5px;text-decoration:line-through">ABC</div>
<svg style="left:880px;top:139px" width="14" height="14" viewBox="0 0 14 14"><rect x=".5" y=".5" width="13" height="13" stroke="#ddd" fill="#f4f4f4"/><path d="M2 4 H10 M2 7 H12 M2 10 H9" stroke="#d0d0d0" stroke-width="1.2"/></svg>
<svg style="left:902px;top:139px" width="14" height="13" viewBox="0 0 14 13"><rect x=".5" y=".5" width="13" height="12" fill="#eee"/><path d="M1 12 L4 6 L7 9 L10 5 L13 12Z" fill="#ddd"/></svg>
<svg style="left:923px;top:138px" width="17" height="15" viewBox="0 0 17 15"><rect x=".6" y=".6" width="12" height="10" stroke="#777" stroke-width="1.2" fill="#f6f6f6"/><rect x="3.6" y="3.6" width="12.8" height="10.8" stroke="#777" stroke-width="1.2" fill="#fff"/><path d="M4 14 L8 8 L11 11 L13 9 L16 14Z" fill="#777"/><circle cx="13" cy="6.5" r="1.2" fill="#777"/></svg>
<svg style="left:948px;top:139px" width="14" height="14" viewBox="0 0 14 14"><rect x=".6" y=".6" width="12.8" height="12.8" stroke="#777" stroke-width="1.2" fill="none"/><rect x="3" y="3" width="8" height="8" fill="#888"/></svg>
<svg style="left:969px;top:139px" width="15" height="15" viewBox="0 0 15 15"><path d="M4 11 V2 L14 0 V10" stroke="#888" stroke-width="1.6" fill="none"/><ellipse cx="2.8" cy="12" rx="2.5" ry="2.2" fill="#888"/><ellipse cx="12" cy="11" rx="2.5" ry="2.2" fill="#888"/></svg>
<svg style="left:991px;top:141px" width="18" height="10" viewBox="0 0 18 10"><rect width="12" height="10" fill="#777"/><path d="M11 5 L18 0 V10Z" fill="#777"/></svg>
<svg style="left:1017px;top:138px" width="13" height="15" viewBox="0 0 13 15"><rect x="5.5" y="0" width="2" height="5" fill="#777"/><rect x="1" y="5" width="11" height="2" fill="#777"/><path d="M1.5 8 H11.5 L12.5 15 H0.5Z" fill="#777"/></svg>
<svg style="left:1037px;top:140px" width="16" height="15" viewBox="0 0 16 15"><rect x=".6" y=".6" width="14.8" height="7.8" stroke="#777" stroke-width="1.2" fill="none"/><rect x="0" y="0" width="16" height="3" fill="#777"/><path d="M8 3 V9" stroke="#777" stroke-width="1"/><path d="M3 10.5 H8 M5.5 10.5 V15 M4 15 H7" stroke="#666" stroke-width="1"/></svg>
<!-- edit area -->
<div class="a" style="left:1092px;top:162px;width:17px;height:589px;background:#f1f1f1"></div>
<svg style="left:1097px;top:170px" width="7" height="4" viewBox="0 0 7 4"><path d="M0 4 L3.5 0 L7 4Z" fill="#999"/></svg>
<svg style="left:1097px;top:740px" width="7" height="4" viewBox="0 0 7 4"><path d="M0 0 L3.5 4 L7 0Z" fill="#999"/></svg>
<svg style="left:660px;top:214px" width="13" height="17" viewBox="0 0 13 17"><path d="M6.5 .8 L12.2 7 H9 V16.2 H4 V7 H.8Z" stroke="#cfcfcf" stroke-width="1.2" fill="none"/></svg>
<div class="t" style="left:681px;top:217px;font-size:14.4px;color:#cdcdcd;letter-spacing:.5px">在这里直接<b style="color:#c4c4c4;font-weight:500">输入</b>或<b style="color:#c4c4c4;font-weight:500">粘贴</b>内容</div>
<svg style="left:661px;top:447px" width="17" height="13" viewBox="0 0 17 13"><path d="M.8 6.5 L7 .8 V4 H16.2 V9 H7 V12.2Z" stroke="#cfcfcf" stroke-width="1.2" fill="none"/></svg>
<div class="a" style="left:688px;top:434px;font-size:14.3px;line-height:20.5px;color:#cdcdcd;white-space:nowrap"><b style="font-weight:bold;color:#c6c6c6">点击</b>左侧样式<br><b style="font-weight:bold;color:#c6c6c6">插入</b>到编辑区</div>
<div class="a" style="left:959px;top:424px;font-size:14.3px;line-height:20.5px;color:#cdcdcd;white-space:nowrap">编辑完成后点<br><b style="font-weight:bold;color:#c6c6c6">微信复制</b>到微<br>信后台粘贴</div>
<svg style="left:1055px;top:447px" width="17" height="13" viewBox="0 0 17 13"><path d="M16.2 6.5 L10 .8 V4 H.8 V9 H10 V12.2Z" stroke="#cfcfcf" stroke-width="1.2" fill="none"/></svg>
<!-- status bar -->
<div class="a" style="left:641px;top:751px;width:468px;height:1px;background:#e6e6e6"></div>
<svg style="left:661px;top:761px" width="12" height="12" viewBox="0 0 12 12"><path d="M9 .6 H2 Q.6 .6 .6 2 V10 Q.6 11.4 2 11.4 H10 Q11.4 11.4 11.4 10 V6" stroke="#555" stroke-width="1.2" fill="none"/><path d="M3 5 L5.5 8 L11.5 1.5" stroke="#333" stroke-width="1.8" fill="none"/></svg>
<div class="t" style="left:677px;top:760px;font-size:14px;color:#444">违规检测</div>
<svg style="left:764px;top:760px" width="15" height="14" viewBox="0 0 15 14"><path d="M14.5 .5 Q13 3 8 8 L6.5 6.5 Q11.5 1.5 14.5 .5Z" fill="#444"/><path d="M6 7 L7.5 8.5 Q7 12 4 13 Q2 14 0 13.5 Q2 12.5 2.5 10.5 Q3 7.5 6 7Z" fill="#444"/></svg>
<div class="t" style="left:782px;top:760px;font-size:14px;color:#444">使用签名</div>
<svg style="left:845px;top:765px" width="12" height="7" viewBox="0 0 12 7"><path d="M0 0 H12 L6 7Z" fill="#222"/></svg>
<svg style="left:869px;top:762px" width="11" height="11" viewBox="0 0 11 11"><rect x=".5" y=".5" width="4" height="4" stroke="#555" fill="none"/><rect x="6.5" y=".5" width="4" height="4" stroke="#555" fill="none"/><rect x=".5" y="6.5" width="4" height="4" stroke="#555" fill="none"/><rect x="6.5" y="6.5" width="2" height="2" fill="#555"/><rect x="9" y="9" width="2" height="2" fill="#555"/></svg>
<div class="t" style="left:884px;top:760px;font-size:14px;color:#444">二维码设计</div>
<div class="t" style="left:1030px;top:761px;font-size:12px;color:#aaa">已输入0字0图</div>

<!-- COLOR PANEL -->
<div id="cp" class="a"></div>
<div class="t" style="left:1136px;top:90px;font-size:15px;color:#333">调色盘</div>
<svg style="left:1190px;top:92px" width="14" height="14" viewBox="0 0 14 14"><circle cx="7" cy="7" r="6.2" stroke="#333" stroke-width="1.3" fill="none"/><path d="M4.8 5.4 Q4.8 3.2 7 3.2 Q9.2 3.2 9.2 5.2 Q9.2 6.5 7 7.4 V8.6" stroke="#333" stroke-width="1.4" fill="none"/><circle cx="7" cy="10.6" r=".9" fill="#333"/></svg>
<div class="a" style="left:1128px;top:111px;width:82px;height:32px;background:#ebebeb"></div>
<svg style="left:1132px;top:116px" width="59" height="23" viewBox="0 0 59 23">
 <rect x="0" y="0" width="59" height="23" fill="#fff"/>
 <g fill="#d2d2d2">
<rect x="0" y="0" width="6" height="6"/><rect x="12" y="0" width="6" height="6"/><rect x="24" y="0" width="6" height="6"/><rect x="36" y="0" width="6" height="6"/><rect x="48" y="0" width="6" height="6"/><rect x="6" y="6" width="6" height="6"/><rect x="18" y="6" width="6" height="6"/><rect x="30" y="6" width="6" height="6"/><rect x="42" y="6" width="6" height="6"/><rect x="54" y="6" width="6" height="6"/><rect x="0" y="12" width="6" height="6"/><rect x="12" y="12" width="6" height="6"/><rect x="24" y="12" width="6" height="6"/><rect x="36" y="12" width="6" height="6"/><rect x="48" y="12" width="6" height="6"/><rect x="6" y="18" width="6" height="6"/><rect x="18" y="18" width="6" height="6"/><rect x="30" y="18" width="6" height="6"/><rect x="42" y="18" width="6" height="6"/><rect x="54" y="18" width="6" height="6"/></g>
 <rect x="19" y="0" width="21" height="23" fill="#fff"/>
 <path d="M20 1 L39 22 M39 1 L20 22" stroke="#666" stroke-width="1.2"/>
 <rect x=".7" y=".7" width="57.6" height="21.6" stroke="#555" stroke-width="1.4" fill="none"/>
</svg>
<svg style="left:1197px;top:124px" width="8" height="7" viewBox="0 0 8 7"><path d="M0 0 H8 L4 7Z" fill="#111"/></svg>
<div class="t" style="left:1129px;top:150px;font-size:14px;color:#333">选中换色</div>
<svg style="left:1199px;top:154px" width="11" height="6" viewBox="0 0 11 6"><path d="M0 0 H11 L5.5 6Z" fill="#bbb"/></svg>
<div class="sw" style="left:1128.0px;top:175.7px;background:#ad1c1c"></div>
<div class="sw" style="left:1150.0px;top:175.7px;background:#d9272a"></div>
<div class="sw" style="left:1172.5px;top:175.7px;background:#ec6f5f"></div>
<div class="sw" style="left:1194.6px;top:175.7px;background:#fadbd2"></div>
<div class="sw" style="left:1128.0px;top:198.0px;background:#d32a6b"></div>
<div class="sw" style="left:1150.0px;top:198.0px;background:#e96b9b"></div>
<div class="sw" style="left:1172.5px;top:198.0px;background:#f1b4cf"></div>
<div class="sw" style="left:1194.6px;top:198.0px;background:#fbe1ea"></div>
<div class="sw" style="left:1128.0px;top:220.3px;background:#e05a1d"></div>
<div class="sw" style="left:1150.0px;top:220.3px;background:#f8871f"></div>
<div class="sw" style="left:1172.5px;top:220.3px;background:#f9b12b"></div>
<div class="sw" style="left:1194.6px;top:220.3px;background:#fbe39f"></div>
<div class="sw" style="left:1128.0px;top:242.6px;background:#1a8b2b"></div>
<div class="sw" style="left:1150.0px;top:242.6px;background:#79b03b"></div>
<div class="sw" style="left:1172.5px;top:242.6px;background:#c1c42b"></div>
<div class="sw" style="left:1194.6px;top:242.6px;background:#e0ebcf"></div>
<div class="sw" style="left:1128.0px;top:265.0px;background:#2b4aa6"></div>
<div class="sw" style="left:1150.0px;top:265.0px;background:#239ae2"></div>
<div class="sw" style="left:1172.5px;top:265.0px;background:#58b9ef"></div>
<div class="sw" style="left:1194.6px;top:265.0px;background:#b1ddf6"></div>
<div class="sw" style="left:1128.0px;top:287.3px;background:#8a3bb8"></div>
<div class="sw" style="left:1150.0px;top:287.3px;background:#a75bc9"></div>
<div class="sw" style="left:1172.5px;top:287.3px;background:#d0a1e2"></div>
<div class="sw" style="left:1194.6px;top:287.3px;background:#b96f5e"></div>
<div class="sw" style="left:1128.0px;top:309.6px;background:#232323"></div>
<div class="sw" style="left:1150.0px;top:309.6px;background:#707070"></div>
<div class="sw" style="left:1172.5px;top:309.6px;background:#c2c2c2"></div>
<div class="sw" style="left:1194.6px;top:309.6px;background:#f2f2f2"></div>
<svg style="left:1143px;top:341px" width="9" height="10" viewBox="0 0 9 10"><path d="M1 1 L4.5 4.5 L8 1 M1 5 L4.5 8.5 L8 5" stroke="#333" stroke-width="1.2" fill="none"/></svg>
<div class="t" style="left:1155px;top:339px;font-size:14px;color:#333">渐变色</div>
<div class="btn" style="top:367.5px"><svg style="left:13px;top:8px" width="13" height="14" viewBox="0 0 13 14"><path d="M4 .7 H12.3 V9 M1 4 H8.8 V13.3 H.7 V4Z" stroke="#fff" stroke-width="1.4" fill="none"/><path d="M3 7 H6.5 M3 10 H6.5" stroke="#fff" stroke-width="1.2"/></svg><span class="t" style="left:32.5px;top:8px;font-size:14px;font-weight:bold">微信复制</span></div>
<div class="btn" style="top:403.0px"><svg style="left:13px;top:8px" width="13" height="13" viewBox="0 0 13 13"><path d="M.7 .7 H10 L12.3 3 V12.3 H.7Z" stroke="#fff" stroke-width="1.4" fill="none"/><rect x="3" y="1" width="6" height="4" fill="#fff"/><rect x="3" y="7.5" width="7" height="4" fill="#fff"/></svg><span class="t" style="left:32.5px;top:8px;font-size:14px;font-weight:bold">保存文章</span></div>
<div class="btn" style="top:438.5px"><svg style="left:13px;top:8px" width="13" height="13" viewBox="0 0 13 13"><rect width="13" height="13" rx="2" fill="#fff"/><path d="M6.5 3 V10 M3 6.5 H10" stroke="#2cade2" stroke-width="1.8"/></svg><span class="t" style="left:32.5px;top:8px;font-size:14px;font-weight:bold">快速保存</span></div>
<div class="btn" style="top:474.0px"><svg style="left:12px;top:9px" width="15" height="12" viewBox="0 0 15 12"><path d="M1 3.5 H13 M10 .5 L13.5 3.5 L10 6.5 M14 8.5 H2 M5 5.5 L1.5 8.5 L5 11.5" stroke="#fff" stroke-width="1.6" fill="none"/></svg><span class="t" style="left:32.5px;top:8px;font-size:14px;font-weight:bold">同步微信</span></div>
<div class="btn" style="top:509.5px"><svg style="left:13px;top:8px" width="13" height="14" viewBox="0 0 13 14"><path d="M.7 .7 H9 L12.3 4 V13.3 H.7Z" stroke="#fff" stroke-width="1.4" fill="none"/><circle cx="6.5" cy="8.5" r="2.8" stroke="#fff" stroke-width="1.3" fill="none"/><path d="M6.5 3.5 V8.5" stroke="#fff" stroke-width="1.3"/></svg><span class="t" style="left:32.5px;top:8px;font-size:14px;font-weight:bold">导入文章</span></div>
<div class="btn" style="top:545.0px"><svg style="left:13px;top:8px" width="13" height="14" viewBox="0 0 13 14"><path d="M.7 .7 H9 L12.3 4 V13.3 H.7Z" stroke="#fff" stroke-width="1.4" fill="none"/><path d="M2 12 L5 7 L7.5 10 L9 8.5 L11 12Z" fill="#fff"/><circle cx="4.5" cy="4.5" r="1.3" fill="#fff"/></svg><span class="t" style="left:32.5px;top:8px;font-size:14px;font-weight:bold">生成图片</span></div>
<div class="btn" style="top:580.5px"><svg style="left:14px;top:8px" width="11" height="14" viewBox="0 0 11 14"><rect x="3" y="0" width="5" height="2" fill="#fff"/><path d="M.7 2.7 H10.3 V13.3 H.7Z" stroke="#fff" stroke-width="1.4" fill="none"/><rect x="2.5" y="5" width="6" height="6.5" fill="#fff"/></svg><span class="t" style="left:32.5px;top:8px;font-size:14px;font-weight:bold">清空内容</span></div>
<div class="btn" style="top:616.0px"><svg style="left:14px;top:8px" width="12" height="14" viewBox="0 0 12 14"><path d="M.7 .7 H8 L11.3 4 V13.3 H.7Z" stroke="#fff" stroke-width="1.4" fill="none"/><path d="M3 6 H9 M3 8.5 H9 M3 11 H9" stroke="#fff" stroke-width="1.1"/></svg><span class="t" style="left:32.5px;top:8px;font-size:14px;font-weight:bold">云端草稿</span></div>
<div class="btn" style="top:651.5px"><svg style="left:12px;top:10px" width="15" height="10" viewBox="0 0 15 10"><path d="M0 5 Q7.5 -3.5 15 5 Q7.5 13.5 0 5Z" fill="#fff"/><circle cx="7.5" cy="5" r="2.6" fill="#2cade2"/><circle cx="7.5" cy="5" r="1.3" fill="#fff"/></svg><span class="t" style="left:32.5px;top:8px;font-size:14px;font-weight:bold">文章预览</span></div>
<div class="btn" style="top:687.0px"><svg style="left:12px;top:8px" width="16" height="14" viewBox="0 0 16 14"><circle cx="4" cy="3" r="2.5" fill="#fff"/><circle cx="12" cy="3" r="2.5" fill="#fff"/><circle cx="8" cy="5" r="2.8" fill="#fff"/><path d="M0 11 Q0 6 4 6 Q8 6 8 11Z M8 11 Q8 6 12 6 Q16 6 16 11Z" fill="#fff"/><path d="M3 14 Q3 8.5 8 8.5 Q13 8.5 13 14Z" fill="#fff"/></svg><span class="t" style="left:32.5px;top:8px;font-size:14px;font-weight:bold">进群交流</span></div>

<!-- FOOTER -->
<div class="a" style="left:0;top:781px;width:1280px;height:1px;background:#f4f4f4"></div>
<div id="ft" class="a">
  <div class="t" style="left:73px;top:5px;font-size:17px">©</div>
  <div class="t" style="left:89px;top:6px;font-size:15.5px">Powered By 96<span style="font-size:14px">微信编辑器.</span></div>
  <div class="t" style="left:286px;top:6px;font-size:14px">沪<span style="font-size:15.5px">ICP</span>备<span style="font-size:15.5px">19026583</span>号<span style="font-size:15.5px">-6</span></div>
  <svg style="left:452px;top:10px" width="17" height="10" viewBox="0 0 17 10"><path d="M3 0 H17 L14 10 H0Z" fill="#e8e8e8"/><text x="8.5" y="8" text-anchor="middle" font-family="Liberation Sans" font-size="7" font-weight="bold" fill="#858585">AD</text></svg>
  <div class="t" style="left:473px;top:8px;font-size:14.5px">广告服务</div>
  <svg style="left:551px;top:9px" width="17" height="12" viewBox="0 0 17 12"><path d="M1 5 L5 1 H9 L12 3 L16 5 L11 11 H7 L1 6Z" stroke="#e8e8e8" stroke-width="1.6" fill="none"/><path d="M6 4 L9 7 L11 5" stroke="#e8e8e8" stroke-width="1.3" fill="none"/></svg>
  <div class="t" style="left:570px;top:8px;font-size:14.5px">友情链接</div>
  <svg style="left:649px;top:8px" width="16" height="14" viewBox="0 0 16 14"><circle cx="4" cy="3" r="2.5" fill="#e0e0e0"/><circle cx="12" cy="3" r="2.5" fill="#e0e0e0"/><circle cx="8" cy="5" r="2.8" fill="#e0e0e0"/><path d="M0 11 Q0 6 4 6 Q8 6 8 11Z M8 11 Q8 6 12 6 Q16 6 16 11Z" fill="#e0e0e0"/><path d="M3 14 Q3 8.5 8 8.5 Q13 8.5 13 14Z" fill="#e0e0e0"/></svg>
  <div class="t" style="left:668px;top:8px;font-size:14.5px">联系客服</div>
  <div class="a" style="left:1152px;top:0;width:69px;height:30px;background:#fff"></div>
  <div class="t" style="left:1162px;top:9px;font-size:12.5px;color:#333;-webkit-text-stroke:0">问题反馈</div>
</div>
</body></html>
